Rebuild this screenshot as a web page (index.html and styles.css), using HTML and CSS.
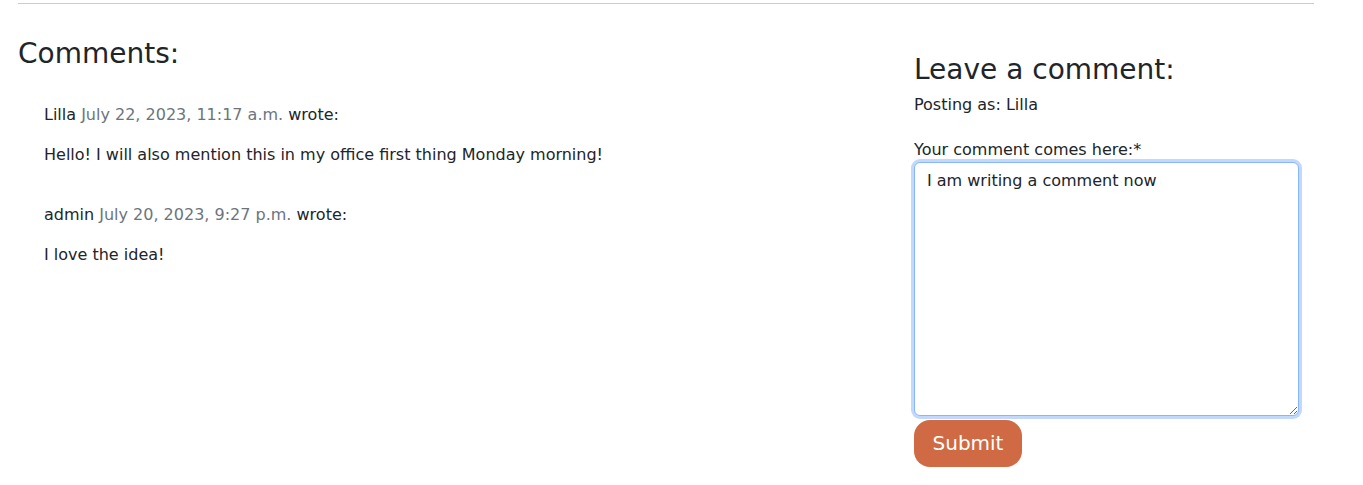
FILE: index.html
```html
<!DOCTYPE html>
<html lang="en">
<head>
<meta charset="utf-8">
<title>Comments</title>
<link rel="stylesheet" href="styles.css">
</head>
<body>
<div class="page">
  <hr class="rule">
  <div class="row">
    <section class="comments">
      <h3 class="heading">Comments:</h3>
      <div class="comment">
        <p class="meta">Lilla <span class="date">July 22, 2023, 11:17 a.m.</span> wrote:</p>
        <p class="body">Hello! I will also mention this in my office first thing Monday morning!</p>
      </div>
      <div class="comment">
        <p class="meta">admin <span class="date">July 20, 2023, 9:27 p.m.</span> wrote:</p>
        <p class="body">I love the idea!</p>
      </div>
    </section>
    <section class="form-col">
      <h3 class="heading">Leave a comment:</h3>
      <p class="posting">Posting as: Lilla</p>
      <form class="form">
        <label class="label" for="body">Your comment comes here:*</label>
        <textarea id="body" class="textarea">I am writing a comment now</textarea>
        <button type="button" class="submit">Submit</button>
      </form>
    </section>
  </div>
</div>
</body>
</html>
```
FILE: styles.css
```css
html, body {
  margin: 0;
  padding: 0;
  background: #fff;
}
body {
  font-family: "DejaVu Sans", sans-serif;
  font-size: 16px;
  line-height: 1.5;
  color: #212529;
}
.page {
  width: 1296px;
  padding-left: 18px;
}
.rule {
  margin: 3px 0 0;
  border: 0;
  border-top: 1px solid #ccc;
}
.row {
  display: flex;
}
.heading {
  font-size: 28px;
  font-weight: 500;
  line-height: 1.2;
  margin: 0;
}
.comments {
  width: 896px;
  padding-top: 33px;
}
.comment {
  padding-left: 26px;
  padding-top: 20px;
}
.comments .heading + .comment {
  padding-top: 32px;
}
.meta, .body {
  margin: 0 0 16px;
}
.date {
  color: #6c757d;
}
.form-col {
  width: 386px;
  padding-top: 49px;
}
.posting {
  margin: 6px 0 0;
}
.form {
  display: flex;
  flex-direction: column;
  align-items: flex-start;
  padding-top: 21px;
}
.label {
  display: block;
  line-height: 24px;
}
.textarea {
  box-sizing: border-box;
  width: 385px;
  height: 254px;
  margin: 0;
  padding: 6px 12px;
  font: inherit;
  color: #212529;
  border: 1px solid #86b7fe;
  border-radius: 6px;
  box-shadow: 0 0 0 3px #c2d9fd;
  outline: none;
  resize: vertical;
}
.submit {
  margin-top: 4px;
  width: 108px;
  height: 47px;
  border: 0;
  border-radius: 16px;
  background: #cf6a44;
  color: #fff;
  font-family: inherit;
  font-size: 20px;
  cursor: pointer;
}
```
